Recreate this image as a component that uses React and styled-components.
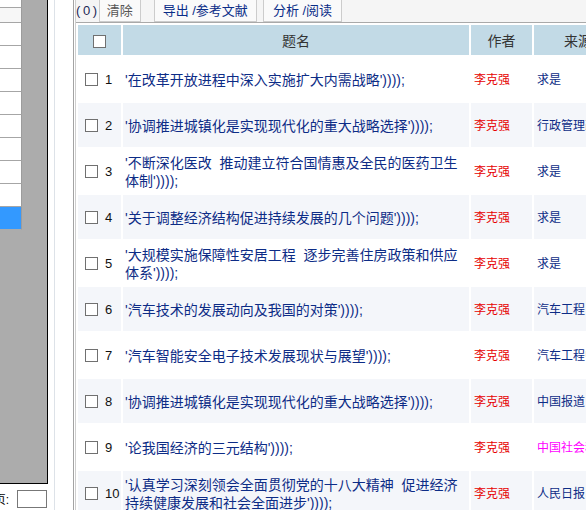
import React from "react";
import styled, { createGlobalStyle } from "styled-components";

const Global = createGlobalStyle`
  * { box-sizing: border-box; }
  html, body {
    margin: 0;
    padding: 0;
    width: 586px;
    height: 510px;
    overflow: hidden;
    background: #ffffff;
    font-family: "Liberation Sans", "Noto Sans CJK SC", sans-serif;
  }
`;

const Page = styled.div`
  display: flex;
  width: 586px;
  height: 510px;
  overflow: hidden;
`;

const LeftPanel = styled.div`
  width: 48px;
  flex-shrink: 0;
  display: flex;
  flex-direction: column;
`;

const Frame = styled.div`
  height: 490px;
  background: #acacac;
  border-right: 1px solid #000;
  border-bottom: 1px solid #000;
`;

const List = styled.div`
  width: 22px;
  display: flex;
  flex-direction: column;
`;

const ListItem = styled.div`
  height: ${(p) => p.$h}px;
  background: ${(p) => p.$bg};
  border-right: 1px solid #9c9c9c;
  border-bottom: 1px solid ${(p) => (p.$last ? "#acacac" : "#a6a6a6")};
`;

const Footer = styled.div`
  display: flex;
  align-items: flex-start;
  margin-top: 6px;
  height: 20px;
`;

const Label = styled.div`
  width: 9px;
  overflow: hidden;
  display: flex;
  justify-content: flex-end;
  white-space: nowrap;
  font-size: 12px;
  line-height: 14px;
  margin-top: 3px;
  color: #000;
`;

const PageInput = styled.div`
  width: 30px;
  height: 18px;
  margin-left: 8px;
  border: 1px solid #777;
  background: #fff;
`;

const Gutter = styled.div`
  width: 19px;
  margin-left: 6px;
  flex-shrink: 0;
  border-left: 1px solid #dde2e8;
`;

const Main = styled.div`
  flex: 1;
  min-width: 0;
  border-left: 1px solid #a3a3a3;
  padding-left: 1px;
  display: flex;
`;

const Inner = styled.div`
  flex: 1;
  min-width: 0;
  border-left: 1px solid #cfcfcf;
  display: flex;
  flex-direction: column;
`;

const Toolbar = styled.div`
  height: 25px;
  background: #f5f5f5;
  border-bottom: 1px solid #a9a9a9;
  display: flex;
  align-items: flex-start;
  width: 560px;
`;

const Count = styled.span`
  font-size: 13px;
  line-height: 22px;
  color: #1c2a55;
  white-space: pre;
  letter-spacing: -0.5px;
  margin-right: 2px;
`;

const Button = styled.div`
  height: 22px;
  padding: 0 ${(p) => p.$pad}px;
  margin-right: ${(p) => p.$gap}px;
  border: 1px solid #cccccc;
  border-top: none;
  background: #fafafa;
  font-size: 13px;
  line-height: 21px;
  color: ${(p) => (p.$muted ? "#555" : "#0a2d88")};
  white-space: nowrap;
`;

const Table = styled.table`
  border-collapse: separate;
  border-spacing: 2px;
  table-layout: fixed;
  width: 548px;
`;

const Th = styled.th`
  height: 30px;
  padding: 0;
  background: #c2dae6;
  font-size: 14px;
  font-weight: normal;
  color: #333;
  text-align: center;
  vertical-align: middle;
`;

const Td = styled.td`
  height: 44px;
  padding: 0 ${(p) => p.$pad ?? 3}px;
  background: ${(p) => (p.$alt ? "#f4f6fa" : "#ffffff")};
  vertical-align: middle;
  overflow: hidden;
`;

const Box = styled.input.attrs({ type: "checkbox" })`
  appearance: none;
  -webkit-appearance: none;
  width: 13px;
  height: 13px;
  margin: 0;
  border: 1px solid #707070;
  background: #fff;
  vertical-align: middle;
`;

const NumCell = styled.div`
  display: flex;
  align-items: center;
  padding-left: 7px;
  gap: 7px;
`;

const Num = styled.span`
  font-size: 13px;
  color: #111;
`;

const Title = styled.span`
  font-size: 14px;
  line-height: 18px;
  color: #0d2c86;
  display: block;
  padding-top: 2px;
`;

const Author = styled.span`
  font-size: 12px;
  color: #e60000;
  white-space: nowrap;
`;

const Source = styled.span`
  font-size: 12px;
  color: ${(p) => (p.$hot ? "#ff00ff" : "#0d2c86")};
  white-space: nowrap;
`;

const rows = [
  ["'在改革开放进程中深入实施扩大内需战略'))));", "求是"],
  ["'协调推进城镇化是实现现代化的重大战略选择'))));", "行政管理改革"],
  ["'不断深化医改\u00a0 推动建立符合国情惠及全民的医药卫生体制'))));", "求是"],
  ["'关于调整经济结构促进持续发展的几个问题'))));", "求是"],
  ["'大规模实施保障性安居工程\u00a0 逐步完善住房政策和供应体系'))));", "求是"],
  ["'汽车技术的发展动向及我国的对策'))));", "汽车工程"],
  ["'汽车智能安全电子技术发展现状与展望'))));", "汽车工程师"],
  ["'协调推进城镇化是实现现代化的重大战略选择'))));", "中国报道"],
  ["'论我国经济的三元结构'))));", "中国社会科学", true],
  ["'认真学习深刻领会全面贯彻党的十八大精神\u00a0 促进经济持续健康发展和社会全面进步'))));", "人民日报"],
];

const listItems = [
  { h: 8, bg: "#ffffff" },
  { h: 15, bg: "#f7f7f7" },
  ...Array.from({ length: 8 }, () => ({ h: 23, bg: "#ffffff" })),
  { h: 23, bg: "#3399ff", last: true },
];

export default function App() {
  return (
    <>
      <Global />
      <Page>
        <LeftPanel>
          <Frame>
            <List>
              {listItems.map((it, i) => (
                <ListItem key={i} $h={it.h} $bg={it.bg} $last={it.last} />
              ))}
            </List>
          </Frame>
          <Footer>
            <Label>跳转页:</Label>
            <PageInput />
          </Footer>
        </LeftPanel>
        <Gutter />
        <Main>
          <Inner>
            <Toolbar>
              <Count>( 0 )</Count>
              <Button $muted $pad={7} $gap={13}>清除</Button>
              <Button $pad={8} $gap={6}>导出 /参考文献</Button>
              <Button $pad={9} $gap={0}>分析 /阅读</Button>
            </Toolbar>
            <Table>
              <colgroup>
                <col style={{ width: 43 }} />
                <col style={{ width: 346 }} />
                <col style={{ width: 61 }} />
                <col style={{ width: 88 }} />
              </colgroup>
              <thead>
                <tr>
                  <Th>
                    <Box />
                  </Th>
                  <Th>题名</Th>
                  <Th>作者</Th>
                  <Th>来源</Th>
                </tr>
              </thead>
              <tbody>
                {rows.map(([title, source, hot], i) => {
                  const alt = i % 2 === 1;
                  return (
                    <tr key={i}>
                      <Td $alt={alt} $pad={0}>
                        <NumCell>
                          <Box />
                          <Num>{i + 1}</Num>
                        </NumCell>
                      </Td>
                      <Td $alt={alt} $pad={2}>
                        <Title>{title}</Title>
                      </Td>
                      <Td $alt={alt}>
                        <Author>李克强</Author>
                      </Td>
                      <Td $alt={alt}>
                        <Source $hot={hot}>{source}</Source>
                      </Td>
                    </tr>
                  );
                })}
              </tbody>
            </Table>
          </Inner>
        </Main>
      </Page>
    </>
  );
}
